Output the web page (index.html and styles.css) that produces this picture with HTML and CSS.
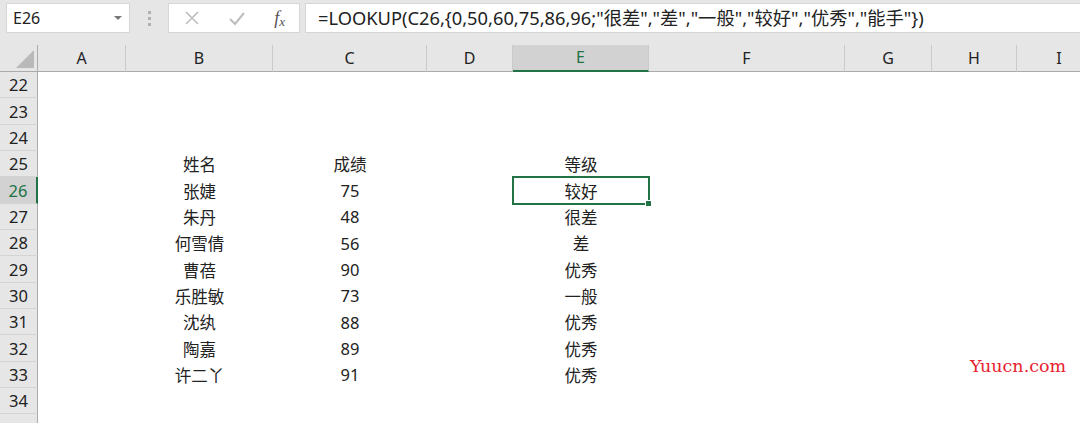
FILE: index.html
```html
<!DOCTYPE html>
<html lang="zh-CN">
<head>
    <meta charset="UTF-8">
    <title>LOOKUP 等级</title>
    <link rel="stylesheet" href="styles.css">
</head>
<body>
    <div class="toolbar">
        <div class="name-box">
            <span>E26</span>
            <span class="caret"></span>
        </div>
        <div class="grip"><i></i><i></i><i></i></div>
        <div class="fx-box">
            <svg class="fx-icon" width="16" height="16" viewBox="0 0 16 16"><path d="M2 2 L14 14 M14 2 L2 14" stroke="#bdbdbd" stroke-width="1.6" fill="none"/></svg>
            <svg class="fx-icon" width="18" height="16" viewBox="0 0 18 16"><path d="M2 9 L7 14 L16 3" stroke="#bdbdbd" stroke-width="2" fill="none"/></svg>
            <span class="fx">f<sub>x</sub></span>
        </div>
        <div class="formula">=LOOKUP(C26,{0,50,60,75,86,96;"很差","差","一般","较好","优秀","能手"})</div>
    </div>

    <div class="sheet" id="sheet">
        <div class="row head">
            <div class="corner"></div>
            <div class="col-head">A</div>
            <div class="col-head">B</div>
            <div class="col-head">C</div>
            <div class="col-head">D</div>
            <div class="col-head selected">E</div>
            <div class="col-head">F</div>
            <div class="col-head">G</div>
            <div class="col-head">H</div>
            <div class="col-head">I</div>
        </div>
    </div>

    <div class="watermark">Yuucn.com</div>

    <script>
        let sheet = document.getElementById('sheet');
        let data = {
            25: ['姓名', '成绩', '等级'],
            26: ['张婕', '75', '较好'],
            27: ['朱丹', '48', '很差'],
            28: ['何雪倩', '56', '差'],
            29: ['曹蓓', '90', '优秀'],
            30: ['乐胜敏', '73', '一般'],
            31: ['沈纨', '88', '优秀'],
            32: ['陶嘉', '89', '优秀'],
            33: ['许二丫', '91', '优秀']
        };

        for (let r = 22; r <= 35; r++) {
            let row = document.createElement('div');
            row.className = 'row';
            let vals = data[r] || ['', '', ''];
            let cells = ['', vals[0], vals[1], '', vals[2], '', '', '', ''];

            let head = document.createElement('div');
            head.className = 'row-head' + (r === 26 ? ' selected' : '');
            // last row is only a sliver at the bottom edge
            head.textContent = r < 35 ? r : '';
            row.appendChild(head);

            cells.forEach((text, i) => {
                let cell = document.createElement('div');
                cell.className = 'cell';
                if (r === 26 && i === 4) cell.className += ' active';
                cell.textContent = text;
                row.appendChild(cell);
            });
            sheet.appendChild(row);
        }
    </script>
</body>
</html>
```

FILE: styles.css
```css
body {
    margin: 0;
    width: 1080px;
    height: 423px;
    overflow: hidden;
    background-color: #fff;
    font-family: "Noto Sans", "Noto Sans CJK SC", sans-serif;
    color: #222;
    position: relative;
}
.toolbar {
    display: flex;
    align-items: flex-start;
    height: 45px;
    padding: 3px 0 0 6px;
    box-sizing: border-box;
    background-color: #e6e6e6;
}
.name-box {
    width: 124px;
    height: 30px;
    box-sizing: border-box;
    background-color: #fff;
    border: 1px solid #d6d6d6;
    display: flex;
    align-items: center;
    justify-content: space-between;
    padding: 0 7px 0 6px;
    font-size: 16px;
    color: #222;
}
.caret {
    width: 0;
    height: 0;
    border-left: 4px solid transparent;
    border-right: 4px solid transparent;
    border-top: 4px solid #777;
}
.grip {
    width: 38px;
    height: 30px;
    display: flex;
    flex-direction: column;
    align-items: center;
    justify-content: center;
    gap: 3px;
}
.grip i {
    width: 3px;
    height: 3px;
    background-color: #b0b0b0;
}
.fx-box {
    width: 132px;
    height: 30px;
    box-sizing: border-box;
    background-color: #fff;
    border: 1px solid #d6d6d6;
    display: flex;
    align-items: center;
    padding: 0 14px 0 15px;
    justify-content: space-between;
}
.fx {
    font-family: "Liberation Serif", serif;
    font-style: italic;
    font-size: 18px;
    color: #555;
    line-height: 1;
}
.fx sub {
    font-size: 13px;
    vertical-align: -2px;
}
.formula {
    flex: 1;
    margin-left: 5px;
    height: 30px;
    box-sizing: border-box;
    background-color: #fff;
    border: 1px solid #d6d6d6;
    border-right: none;
    padding: 0 0 0 12px;
    font-size: 18.3px;
    line-height: 28px;
    color: #222;
    white-space: nowrap;
}
.row {
    display: grid;
    grid-template-columns: 38px 88px 147px 154px 86px 136px 196px 87px 85px 85px;
    height: 26.35px;
}
.row.head {
    height: 27px;
    background-color: #e6e6e6;
}
.corner {
    position: relative;
    border-right: 1px solid #ababab;
    border-bottom: 1px solid #ababab;
}
.corner::after {
    content: '';
    position: absolute;
    right: 3px;
    bottom: 3px;
    width: 0;
    height: 0;
    border-left: 18px solid transparent;
    border-bottom: 18px solid #b9b9b9;
}
.col-head {
    text-align: center;
    font-size: 16px;
    line-height: 26px;
    border-right: 1px solid #cacaca;
    border-bottom: 1px solid #ababab;
    color: #222;
}
.col-head.selected {
    background-color: #d2d2d2;
    color: #217346;
    border-bottom: 2px solid #217346;
    line-height: 25px;
}
.row-head {
    background-color: #e6e6e6;
    text-align: center;
    font-size: 16.5px;
    border-right: 1px solid #ababab;
    border-bottom: 1px solid #d4d4d4;
    display: flex;
    align-items: center;
    justify-content: center;
    color: #222;
}
.row-head.selected {
    background-color: #d2d2d2;
    color: #217346;
    border-right: 2px solid #217346;
}
.cell {
    display: flex;
    align-items: center;
    justify-content: center;
    font-size: 16.5px;
    color: #222;
}
.cell.active {
    position: relative;
    outline: 2px solid #217346;
    outline-offset: -1px;
}
.cell.active::after {
    content: '';
    position: absolute;
    right: -3px;
    bottom: -3px;
    width: 5px;
    height: 5px;
    background-color: #217346;
    border: 1px solid #fff;
}
.watermark {
    position: absolute;
    left: 970px;
    top: 356px;
    font-family: "DejaVu Serif", serif;
    font-size: 17.5px;
    color: #e8212e;
}
```
